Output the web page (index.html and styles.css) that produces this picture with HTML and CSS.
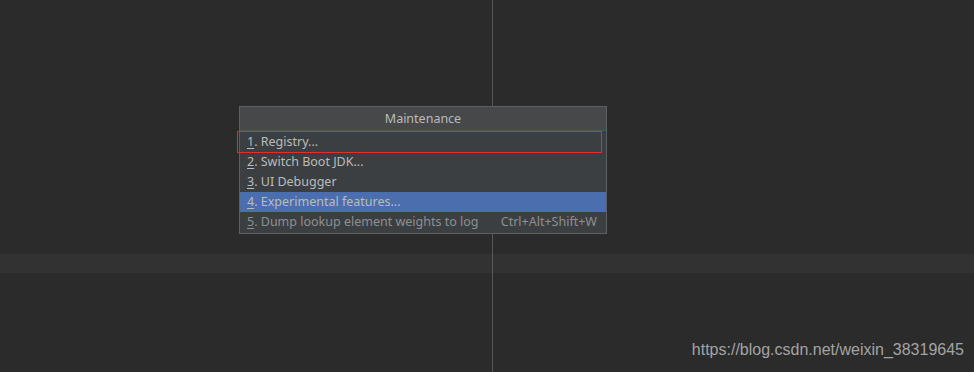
FILE: index.html
```html
<!DOCTYPE html>
<html lang="en">
<head>
  <meta charset="UTF-8">
  <title>Maintenance</title>
  <link rel="stylesheet" href="styles.css">
</head>
<body>

  <div class="editor">
    <div class="caret-line"></div>

    <div class="popup">
      <div class="popup-title">Maintenance</div>
      <ul class="menu">
        <li class="item"><span><u>1</u>. Registry...</span></li>
        <li class="item"><span><u>2</u>. Switch Boot JDK...</span></li>
        <li class="item"><span><u>3</u>. UI Debugger</span></li>
        <li class="item selected"><span><u>4</u>. Experimental features...</span></li>
        <li class="item muted"><span><u>5</u>. Dump lookup element weights to log</span><span class="shortcut">Ctrl+Alt+Shift+W</span></li>
      </ul>
    </div>

    <div class="mark"></div>

    <div class="watermark">https://blog.csdn.net/weixin_38319645</div>
  </div>

</body>
</html>
```

FILE: styles.css
```css
html, body {
  margin: 0;
  padding: 0;
}

body {
  background-color: #2b2b2b;
  font-family: "Noto Sans", "Open Sans", sans-serif;
}

.editor {
  position: relative;
  width: 974px;
  height: 372px;
  overflow: hidden;
  /* right margin guide */
  background: linear-gradient(to right, transparent 492px, #555555 492px, #555555 493px, transparent 493px);
}

.caret-line {
  margin-top: 254px;
  height: 19px;
  background: linear-gradient(to right, #323232 492px, #5a5a5a 492px, #5a5a5a 493px, #323232 493px);
}

.popup {
  position: absolute;
  left: 239px;
  top: 106px;
  width: 366px;
  background-color: #3c3f41;
  border: 1px solid #5e6060;
  color: #bbbbbb;
  font-size: 12.5px;
}

.popup-title {
  height: 23px;
  line-height: 23px;
  text-align: center;
  background-color: #46484a;
  border-bottom: 1px solid #515355;
}

.menu {
  list-style: none;
  margin: 0;
  padding: 1px 0 1px;
}

.item {
  display: flex;
  justify-content: space-between;
  height: 20px;
  line-height: 20px;
  padding: 0 9px 0 7px;
  white-space: nowrap;
}

.item u {
  text-underline-offset: 2px;
}

.selected {
  background-color: #4b6eaf;
}

.muted {
  color: #8d8f91;
}

.shortcut {
  color: #8d8f91;
}

.mark {
  position: absolute;
  left: 237px;
  top: 131px;
  width: 363px;
  height: 20px;
  border: 1px solid #e0302b;
}

.watermark {
  position: absolute;
  right: 10px;
  top: 341px;
  font-family: "Liberation Sans", Arial, sans-serif;
  font-size: 16px;
  color: #a3a3a3;
}
```
